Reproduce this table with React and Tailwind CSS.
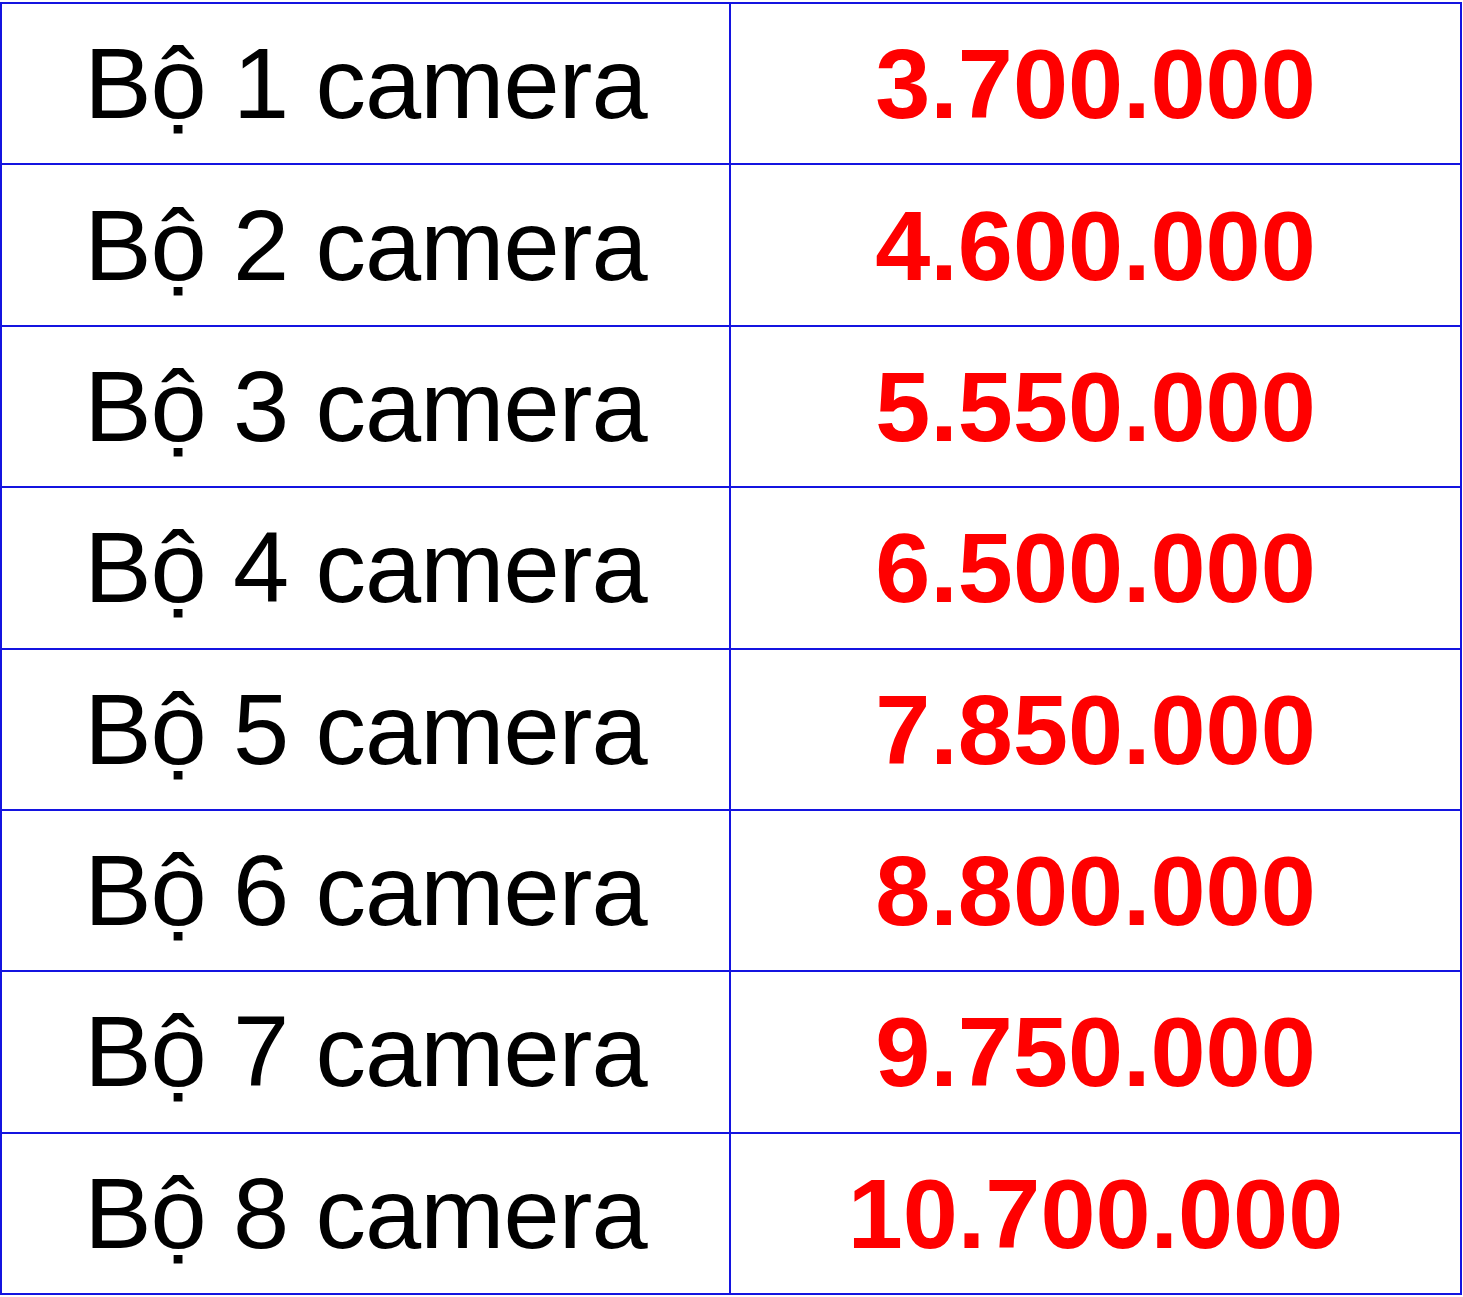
const prices = [
  ["Bộ 1 camera", "3.700.000"],
  ["Bộ 2 camera", "4.600.000"],
  ["Bộ 3 camera", "5.550.000"],
  ["Bộ 4 camera", "6.500.000"],
  ["Bộ 5 camera", "7.850.000"],
  ["Bộ 6 camera", "8.800.000"],
  ["Bộ 7 camera", "9.750.000"],
  ["Bộ 8 camera", "10.700.000"],
]

export default function App() {
  return (
    <div className="w-[1463px] h-[1297px] bg-white pt-[2px] font-['Liberation_Sans',Arial,sans-serif]">
      <div className="w-[1462px] h-[1293px] border-2 border-[#1414e0] flex flex-col divide-y-2 divide-[#1414e0]">
        {prices.map(([label, price]) => (
          <div key={label} className="flex-1 grid grid-cols-2 divide-x-2 divide-[#1414e0]">
            <div className="flex items-center justify-center text-[101px] leading-none text-black tracking-[-0.9px]">
              {label}
            </div>
            <div className="flex items-center justify-center text-[99px] leading-none font-bold text-[#ff0000]">
              {price}
            </div>
          </div>
        ))}
      </div>
    </div>
  )
}
